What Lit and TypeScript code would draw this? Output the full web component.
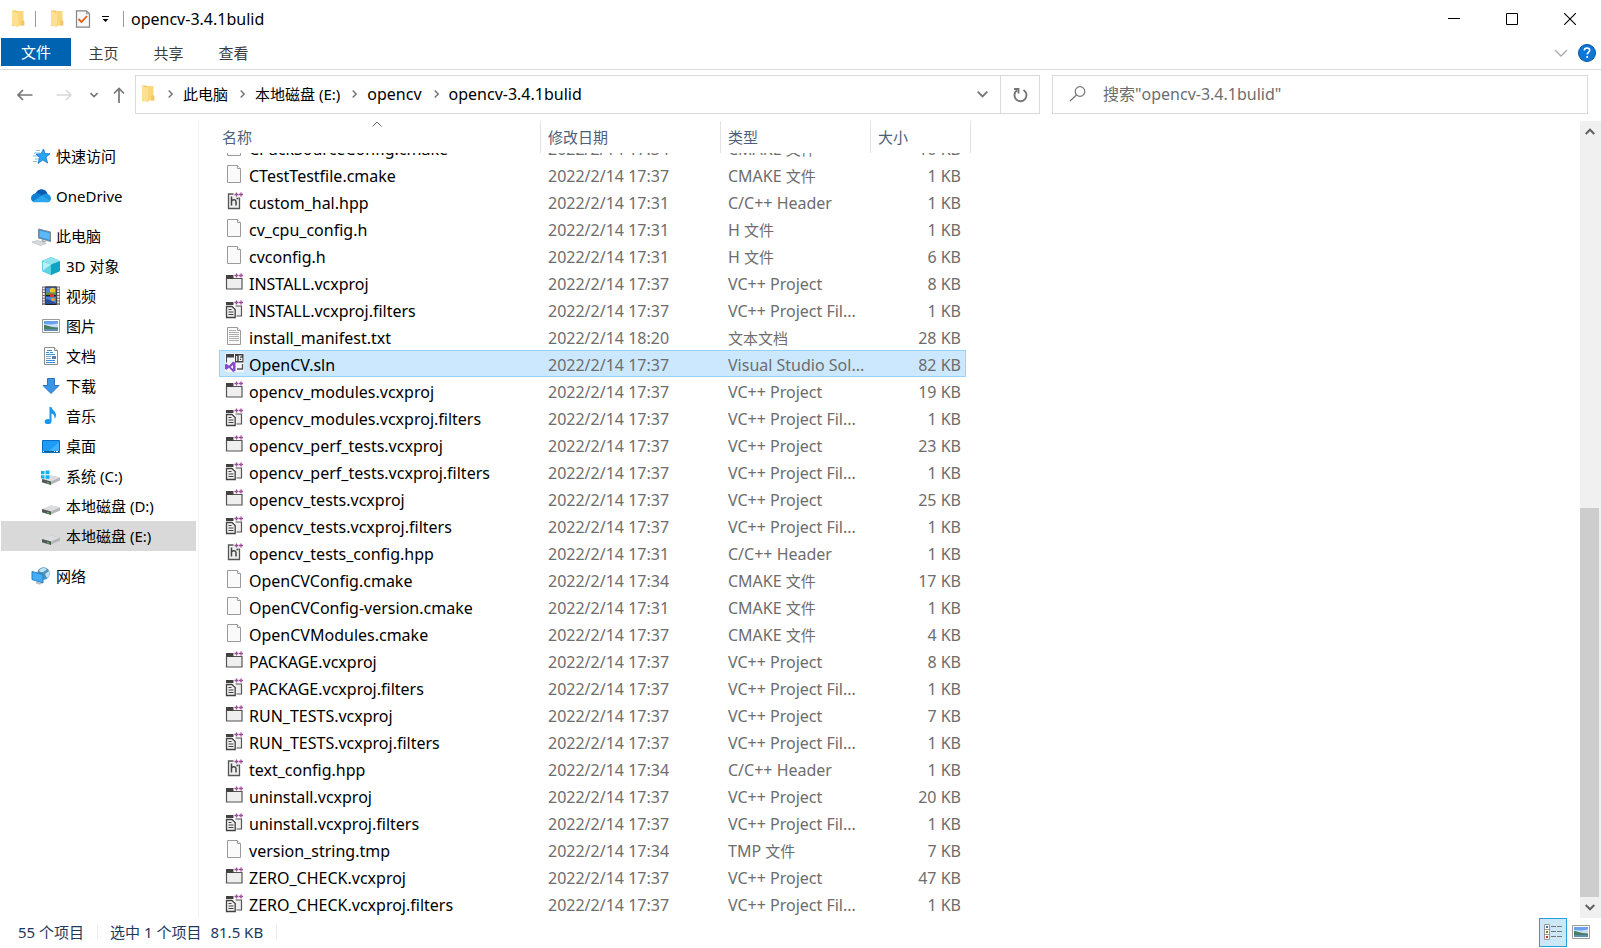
import { LitElement, html, svg, css, TemplateResult } from "lit";
import { customElement, state } from "lit/decorators.js";
import { classMap } from "lit/directives/class-map.js";

const FOLDER = svg`
  <path d="M2 .5h4l3 1.500v14H2z" fill="#f0c25c"/>
  <path d="M7 1h6.500v9.500L14.500 11v4.500H7z" fill="#fbd77c"/>
  <path d="M11.500 10.500h2.500v5h-3z" fill="#f3c766"/>
  <path d="M2 .5l6 2.500v14.500l-6-2.500z" fill="#ffe093"/>`;

const PLUS_PLUS = svg`<path d="M9.500 3.500h4M11.500 1.500v4M14 3.500h4M16 1.500v4" stroke="#9b4f96" stroke-width="1.300"/>`;

const DRIVE = svg`
  <path d="M1 13.500L10 9.500l9 2v3l-9 4-9-2z" fill="#b3b5b9"/>
  <path d="M1 13l9-3.500 9 2-9 4z" fill="#dcdde0"/>
  <path d="M1 13l9 2.500v3.500l-9-2.800z" fill="#55565a"/>
  <path d="M6 15.800l2 .6v1.300l-2-.6z" fill="#3fd43f"/>`;

const PICTURE = svg`
  <path d="M1.500 3.500h17v13h-17z" fill="#fff" stroke="#9a9a9a"/>
  <path d="M3 5h14v10H3z" fill="#c5e0f8"/>
  <path d="M3 5h14v2.500l-7 1-7-.5z" fill="#6aa0f0"/>
  <path d="M3 9c3 0 5 2 14 2.500v2H3z" fill="#4c7d62"/>
  <path d="M3 13h14v2H3z" fill="#5c8fb0"/>`;

/* Every glyph is drawn on a 20 x 20 grid. */
const ICONS: Record<string, TemplateResult> = {
  star: svg`
    <path d="M3 7h6M5 4.500h4M2 10h5M4 13h4M2 15.500h4" stroke="#7cc0f0" stroke-width="1"/>
    <path d="M12.500 3l1.500 4.500 5 .3-4 3.400 1.600 5.800-4.800-3-4.800 3.500 1.600-6-3.600-3.200 5-.6z" fill="#2ba3f3" stroke="#1779c4" stroke-width=".8"/>`,
  cloud: svg`
    <path d="M3.500 9.500C5 5 8 3 11 3.200c3 .2 5 2.300 5.500 4.800L11 12z" fill="#0a5cb8"/>
    <path d="M4 7.500c2.500-1 5 .2 7 2l4 3-11 3.800C1.500 16.300 0 14.500 0 12.300 0 9.800 1.800 8 4 7.500z" fill="#1180d3"/>
    <path d="M11 9.500c2-2 4.500-2 6-1.300 2 .8 3 2.300 3 4.300 0 2.300-1.500 3.800-3.800 3.800L9 13z" fill="#1a93e2"/>
    <path d="M2 15.200l9-5.700 8.200 5.300c-.8 1-1.700 1.500-3 1.500H4c-.8 0-1.500-.4-2-1.100z" fill="#2da6ee"/>`,
  pc: svg`
    <path d="M7.500 3l12 3v9.500l-12-3.500z" fill="#2a8bdc" stroke="#7f8a94"/>
    <path d="M8.500 4.500l10.300 2.600v7L8.500 11z" fill="#5cb8f8"/>
    <path d="M11 14l4 1.200-1 1.300-4-1.200z" fill="#9ba2a8"/>
    <path d="M1 16l5.500-1.500L15 17.500 9.500 19.500z" fill="#d8dbde" stroke="#aab0b5" stroke-width=".6"/>`,
  cube: svg`
    <path d="M1 5l9-4 9 4v10l-9 4-9-4z" fill="#1ab0cf"/>
    <path d="M1 5l9 3v11l-9-4z" fill="#5fd3e2"/>
    <path d="M10 8l9-3v10l-9 4z" fill="#0fa3c4"/>
    <path d="M1 5l9-4 9 4-9 3.500z" fill="#8fe3ec"/>
    <path d="M10 8.500L2 14.500V5.800z" fill="#b5f1f5"/>`,
  film: svg`
    <path d="M1 .5h18v18.500H1z" fill="#6b6d70"/>
    <path d="M2.700 1.500v17M17.300 1.500v17" stroke="#f0f0f0" stroke-width="2" stroke-dasharray="1.800 1"/>
    <path d="M4.500.5h11V19h-11z" fill="#1d1d20"/>
    <path d="M5 1.500h10v7.500H5zM5 10.500h10V18H5z" fill="#4b84dc"/>
    <circle cx="11.500" cy="4.500" r="2.700" fill="#f2c230"/><path d="M5 6.500h10V9H5z" fill="#6d8d3a"/>
    <path d="M9 8h4v3H9z" fill="#d33a2c"/><path d="M5 13l4 1 6 3v1H5z" fill="#2b4c96"/><circle cx="12" cy="13.500" r="1.800" fill="#e3a82a"/>`,
  picture: PICTURE,
  document: svg`
    <path d="M3.500 1.500h10l3 3v14h-13z" fill="#fff" stroke="#8c8c8c"/>
    <path d="M13.500 1.500v3h3" fill="#eee" stroke="#8c8c8c"/>
    <path d="M5 6.500h3M6 4.500h5M9 6.500h3M5 8.500h9M5 14.500h9M5 16.500h9" stroke="#3a8fd6"/>
    <path d="M5 10.500h5M5 12.500h5" stroke="#7aa7cf"/><path d="M11 10h4v3h-4z" fill="#5b7fa5"/>`,
  download: svg`<path d="M6.500 2.500h7v7h4.500L10 17.500 2 9.500h4.500z" fill="#3a94e8" stroke="#2a74bf"/>`,
  music: svg`
    <ellipse cx="7" cy="15.500" rx="3.300" ry="2.600" fill="#1896f0"/>
    <path d="M8.500 1h2c.3 3 4.500 4 4.500 8 0 1.800-.6 3-1.500 4 .5-3.500-1.200-5-3-5.500V15.500h-2z" fill="#1896f0"/>`,
  desktop: svg`
    <path d="M1.500 4.500h17v12h-17z" fill="#1f9bf5" stroke="#0b6fbf"/>
    <path d="M8 15L18 6v9z" fill="#3fb0ff"/>
    <path d="M2 15.500h16" stroke="#0c5ea3"/><path d="M2 15.500h1M13 15.500h1M15 15.500h2" stroke="#fff"/>`,
  system: svg`${DRIVE}<path d="M0 5h3.500v3.200H0zM4.500 4.500h4v3.700h-4zM0 9.200h3.500v3.200H0zM4.500 9.200h4v3.500h-4z" fill="#0fb1f0"/>`,
  drive: DRIVE,
  network: svg`
    <circle cx="12.500" cy="7.500" r="6.300" fill="#5093bd"/>
    <path d="M8 4.500c2-3 5-3 7-2s-1 2-2 3-4 1-5-1zM14 8l4-3c1.500 3 0 6-2 7z" fill="#c5e3ee"/>
    <path d="M1 5.500l11 3v8.500L1 13.500z" fill="#43adf5" stroke="#2b7fb9"/>
    <path d="M5 15.500l6 1.700-2 1.500-4-1.200z" fill="#b4bcc2"/>`,
  page: svg`
    <path d="M2.500 1.500h10l3 3v14h-13z" fill="#fafafa" stroke="#9a9a9a"/>
    <path d="M12.500 1.500v3h3" fill="#fff" stroke="#9a9a9a"/>`,
  text: svg`
    <path d="M2.500 1.500h10l3 3v14h-13z" fill="#fafafa" stroke="#9a9a9a"/>
    <path d="M12.500 1.500v3h3" fill="#fff" stroke="#9a9a9a"/>
    <path d="M4 4.500h7M4 6.500h10M4 8.500h10M4 10.500h10M4 12.500h10M4 14.500h10" stroke="#b0b0b0"/>`,
  header: svg`
    <path d="M3 3h11.500v14.500H3z" fill="#efeff0"/>
    <path d="M8.500 3H3.500v14.500h11V6.500" stroke="#555" stroke-width="1.300"/>
    <path d="M6.500 5.500v9M6.500 10c1-1.800 4.500-1.800 4.500.5v4M11.500 7.500h2" stroke="#424242" stroke-width="1.500"/>
    ${PLUS_PLUS}`,
  project: svg`
    <path d="M1.500 6.500h15.500v10.500h-15.500z" fill="#efeff0" stroke="#555" stroke-width="1.200"/>
    <path d="M1 3h7.500v4H1z" fill="#424242"/>${PLUS_PLUS}`,
  filters: svg`
    <path d="M10.500 7h6v10h-5" fill="#efeff0" stroke="#555" stroke-width="1.200"/>
    <path d="M1 3h7.500v3H1z" fill="#424242"/>
    <path d="M1.500 7.500h5.500l3.200 3v8H1.500z" fill="#efeff0" stroke="#424242" stroke-width="1.300"/>
    <path d="M3.500 10.500h3M3.500 13h5M3.500 15.500h5" stroke="#424242" stroke-width="1.200"/>${PLUS_PLUS}`,
  solution: svg`
    <path d="M0 .5h19v18.500H0z" fill="#f3f5f8"/>
    <path d="M1 1h8v3.500H1zM1 4.500h1v5H1z" fill="#424242"/>
    <path d="M10 1h8.500v8.500H10z" fill="#424242"/>
    <path d="M11.700 3v5M16.800 3h-2.500v4.500h2.500V5.200h-2.500" stroke="#fff" stroke-width="1.100"/>
    <path d="M17.500 11v5H12" stroke="#555" stroke-width="1.300"/>
    <path d="M0 11.500l1.500-.8 2.500 2 4-4.200 2.500 1.200v8L8 19l-4-4.300-2.500 2L0 16zM8 12l-2.300 2L8 16z" fill="#8a49cc" fill-rule="evenodd"/>`,
};

const icon = (name: string) => html`<svg class="icon" viewBox="0 0 20 20" aria-hidden="true">${ICONS[name]}</svg>`;

interface Place { id: string; label: string; icon: string; child?: boolean; }
const GROUPS: Place[][] = [
  [{ id: "quick", label: "快速访问", icon: "star" }],
  [{ id: "onedrive", label: "OneDrive", icon: "cloud" }],
  [
    { id: "pc", label: "此电脑", icon: "pc" },
    { id: "3d", label: "3D 对象", icon: "cube", child: true },
    { id: "video", label: "视频", icon: "film", child: true },
    { id: "pictures", label: "图片", icon: "picture", child: true },
    { id: "docs", label: "文档", icon: "document", child: true },
    { id: "downloads", label: "下载", icon: "download", child: true },
    { id: "music", label: "音乐", icon: "music", child: true },
    { id: "desktop", label: "桌面", icon: "desktop", child: true },
    { id: "c", label: "系统 (C:)", icon: "system", child: true },
    { id: "d", label: "本地磁盘 (D:)", icon: "drive", child: true },
    { id: "e", label: "本地磁盘 (E:)", icon: "drive", child: true },
  ],
  [{ id: "network", label: "网络", icon: "network" }],
];

/* glyph, Latin part of the type, Chinese part of the type */
const KINDS: Record<string, [string, string, string]> = {
  cmake: ["page", "CMAKE ", "文件"],
  hpp: ["header", "C/C++ Header", ""],
  h: ["page", "H ", "文件"],
  vcxproj: ["project", "VC++ Project", ""],
  filters: ["filters", "VC++ Project Fil...", ""],
  txt: ["text", "", "文本文档"],
  sln: ["solution", "Visual Studio Sol...", ""],
  tmp: ["page", "TMP ", "文件"],
};

/* name, time modified, size in KB */
const FILES: [string, string, number][] = [
  ["CPackSourceConfig.cmake", "17:34", 10],
  ["CTestTestfile.cmake", "17:37", 1],
  ["custom_hal.hpp", "17:31", 1],
  ["cv_cpu_config.h", "17:31", 1],
  ["cvconfig.h", "17:31", 6],
  ["INSTALL.vcxproj", "17:37", 8],
  ["INSTALL.vcxproj.filters", "17:37", 1],
  ["install_manifest.txt", "18:20", 28],
  ["OpenCV.sln", "17:37", 82],
  ["opencv_modules.vcxproj", "17:37", 19],
  ["opencv_modules.vcxproj.filters", "17:37", 1],
  ["opencv_perf_tests.vcxproj", "17:37", 23],
  ["opencv_perf_tests.vcxproj.filters", "17:37", 1],
  ["opencv_tests.vcxproj", "17:37", 25],
  ["opencv_tests.vcxproj.filters", "17:37", 1],
  ["opencv_tests_config.hpp", "17:31", 1],
  ["OpenCVConfig.cmake", "17:34", 17],
  ["OpenCVConfig-version.cmake", "17:31", 1],
  ["OpenCVModules.cmake", "17:37", 4],
  ["PACKAGE.vcxproj", "17:37", 8],
  ["PACKAGE.vcxproj.filters", "17:37", 1],
  ["RUN_TESTS.vcxproj", "17:37", 7],
  ["RUN_TESTS.vcxproj.filters", "17:37", 1],
  ["text_config.hpp", "17:34", 1],
  ["uninstall.vcxproj", "17:37", 20],
  ["uninstall.vcxproj.filters", "17:37", 1],
  ["version_string.tmp", "17:34", 7],
  ["ZERO_CHECK.vcxproj", "17:37", 47],
  ["ZERO_CHECK.vcxproj.filters", "17:37", 1],
];

const base = css`
  * { box-sizing: border-box; }
  button {
    font: inherit; color: inherit; background: none; border: 0; padding: 0; margin: 0;
    display: flex; align-items: center; justify-content: center; white-space: nowrap;
  }
  .icon { width: 20px; height: 20px; flex: none; display: block; }
  svg { display: block; flex: none; fill: none; }
`;

@customElement("title-bar")
class TitleBar extends LitElement {
  static styles = [base, css`
    :host { display: flex; align-items: center; height: 38px; padding: 0 2px 0 10px; }
    .folder { width: 16px; height: 18px; }
    .bar { width: 1px; height: 16px; background: #9a9a9a; }
    .quick { display: flex; align-items: center; }
    .gap-b { margin-left: 13px; }
    .gap-a { margin-left: 9px; }
    .gap-c { margin-left: 10px; }
    h1 { font-size: 16px; font-weight: 400; margin: 0 0 0 7px; flex: 1; color: #000; line-height: 38px; }
    .window { display: flex; align-self: stretch; }
    .window button { width: 58px; }
  `];
  render() {
    return html`
      <svg class="folder" viewBox="0 0 16 18">${FOLDER}</svg>
      <div class="quick">
        <span class="bar gap-a"></span>
        <button class="gap-b" aria-label="新建文件夹"><svg class="folder" viewBox="0 0 16 18">${FOLDER}</svg></button>
        <button class="gap-c" aria-label="属性">
          <svg width="16" height="18" viewBox="0 0 16 18">
            <path d="M1.500.8h10l3 3v13.400h-13z" fill="#f7f7f7" stroke="#858585" stroke-width="1.200"/>
            <path d="M11.500.8v3h3" stroke="#9a9a9a"/>
            <path d="M3.500 9l3 3L12 6" stroke="#e8590c" stroke-width="1.800"/>
          </svg>
        </button>
        <button class="gap-c" aria-label="自定义快速访问工具栏">
          <svg width="9" height="8" viewBox="0 0 9 8"><path d="M1 1.500h7" stroke="#000"/><path d="M1.500 4h6L4.500 7z" fill="#000"/></svg>
        </button>
        <span class="bar gap-b"></span>
      </div>
      <h1>opencv-3.4.1bulid</h1>
      <div class="window">
        <button aria-label="最小化"><svg width="12" height="12"><path d="M0 5.500h12" stroke="#000"/></svg></button>
        <button aria-label="最大化"><svg width="12" height="12"><path d="M.5.5h11v11H.5z" stroke="#000"/></svg></button>
        <button aria-label="关闭"><svg width="12" height="12"><path d="M0 0l12 12M12 0L0 12" stroke="#000" stroke-width="1.100"/></svg></button>
      </div>`;
  }
}

@customElement("ribbon-tabs")
class RibbonTabs extends LitElement {
  static styles = [base, css`
    :host { display: flex; height: 32px; padding-left: 1px; border-bottom: 1px solid #dadbdc; color: #3b3b3b; }
    nav { display: flex; align-items: flex-start; flex: 1; }
    nav button { width: 65px; height: 30px; }
    nav .file { width: 70px; height: 28px; background: #0063b1; color: #fff; }
    .tools { display: flex; align-items: center; gap: 10px; padding-right: 5px; height: 30px; }
  `];
  render() {
    return html`
      <nav>
        <button class="file">文件</button>
        ${["主页", "共享", "查看"].map((t) => html`<button>${t}</button>`)}
      </nav>
      <div class="tools">
        <button aria-label="展开功能区"><svg width="14" height="8" viewBox="0 0 14 8"><path d="M1 1l6 6 6-6" stroke="#a9a9a9" stroke-width="1.300"/></svg></button>
        <button aria-label="帮助"><svg width="18" height="18" viewBox="0 0 18 18">
          <circle cx="9" cy="9" r="8.500" fill="#0a78d7" stroke="#08559c"/>
          <path d="M6.300 6.600c0-1.800 1.200-2.600 2.700-2.600s2.700.8 2.700 2.300c0 2-2.500 2-2.500 4.200M9.200 12v2" stroke="#fff" stroke-width="1.600"/>
        </svg></button>
      </div>`;
  }
}

@customElement("address-bar")
class AddressBar extends LitElement {
  static styles = [base, css`
    :host { display: grid; grid-template-columns: 135px minmax(0, 905fr) minmax(0, 548fr); align-items: center; padding: 5px 13px 0 0; height: 44px; }
    .nav { display: flex; align-items: center; padding-left: 17px; }
    .forward { margin-left: 23px; }
    .recent { margin-left: 18px; }
    .up { margin-left: 15px; }
    .box { display: flex; align-items: stretch; height: 39px; border: 1px solid #d9d9d9; background: #fff; }
    .path { padding-left: 4px; }
    .crumbs { display: flex; align-items: center; flex: 1; min-width: 0; margin: 0; padding: 0 0 1px; list-style: none; color: #000; }
    .crumbs li { display: flex; align-items: center; }
    .folder { width: 16px; height: 18px; }
    .sep { margin: 0 10px 0 12px; }
    .drop { width: 36px; }
    .refresh { width: 39px; border-left: 1px solid #d9d9d9; }
    .search { margin-left: 12px; align-items: center; padding: 0 0 1px 16px; gap: 17px; }
    input { font: inherit; font-size: 16px; flex: 1; min-width: 0; border: 0; outline: 0; padding: 0; background: none; color: #6d6d6d; }
    input::placeholder { color: #6d6d6d; opacity: 1; }
    a { color: inherit; text-decoration: none; white-space: nowrap; }
    a.latin { font-size: 16px; }
  `];
  render() {
    const crumbs = ["此电脑", "本地磁盘 (E:)", "opencv", "opencv-3.4.1bulid"];
    return html`
      <div class="nav">
        <button aria-label="后退"><svg width="16" height="12" viewBox="0 0 16 12"><path d="M6 1L1 6l5 5M1 6h14.500" stroke="#767676" stroke-width="1.700"/></svg></button>
        <button class="forward" aria-label="前进"><svg width="16" height="12" viewBox="0 0 16 12"><path d="M10 1l5 5-5 5M15 6H.5" stroke="#d8d8d8" stroke-width="1.500"/></svg></button>
        <button class="recent" aria-label="最近的位置"><svg width="8" height="6" viewBox="0 0 8 6"><path d="M.5 1L4 4.500 7.500 1" stroke="#767676" stroke-width="1.600"/></svg></button>
        <button class="up" aria-label="向上"><svg width="12" height="16" viewBox="0 0 12 16"><path d="M1 6.500l5-5 5 5M6 1.500V16" stroke="#767676" stroke-width="1.700"/></svg></button>
      </div>
      <div class="box path">
        <ol class="crumbs">
          <li><svg class="folder" viewBox="0 0 16 18">${FOLDER}</svg></li>
          ${crumbs.map((c) => html`
            <li>
              <svg class="sep" width="5" height="8" viewBox="0 0 5 8"><path d="M.7.500L4.200 4 .7 7.500" stroke="#767676" stroke-width="1.500"/></svg>
              <a href="#" class=${classMap({ latin: c.startsWith("opencv") })}>${c}</a>
            </li>`)}
        </ol>
        <button class="drop" aria-label="以前的位置"><svg width="11" height="7" viewBox="0 0 11 7"><path d="M.7.7l4.800 4.800L10.300.7" stroke="#767676" stroke-width="1.800"/></svg></button>
        <button class="refresh" aria-label="刷新">
          <svg width="16" height="16" viewBox="0 0 16 16"><path d="M11.500 3a6 6 0 1 1-6.500.3M2 2h4.500v4.500" stroke="#767676" stroke-width="1.900"/></svg>
        </button>
      </div>
      <label class="box search">
        <svg width="17" height="16" viewBox="0 0 17 16"><circle cx="11" cy="5.500" r="4.800" stroke="#767676" stroke-width="1.200"/><path d="M7.500 9L1 15" stroke="#767676" stroke-width="1.300"/></svg>
        <input type="text" aria-label="搜索" placeholder='搜索"opencv-3.4.1bulid"' />
      </label>`;
  }
}

@customElement("side-nav")
class SideNav extends LitElement {
  @state() current = "e";
  static styles = [base, css`
    :host { display: block; width: 199px; flex: none; border-right: 1px solid #f2f2f2; padding: 20px 2px 0 1px; color: #000; }
    nav { display: flex; flex-direction: column; gap: 10px; }
    a { display: flex; align-items: center; height: 30px; padding-left: 30px; gap: 5px; color: inherit; text-decoration: none; white-space: nowrap; }
    a.child { padding-left: 40px; }
    a.current { background: #d9d9d9; }
  `];
  render() {
    return html`<nav>
      ${GROUPS.map((g) => html`<div>
        ${g.map((p) => html`
          <a href="#${p.id}" class=${classMap({ child: !!p.child, current: p.id === this.current })}
            @click=${(e: Event) => { e.preventDefault(); this.current = p.id; }}>${icon(p.icon)}${p.label}</a>`)}
      </div>`)}
    </nav>`;
  }
}

@customElement("file-list")
class FileList extends LitElement {
  @state() selected = "OpenCV.sln";
  static styles = [base, css`
    :host { display: flex; flex: 1; min-width: 0; min-height: 0; }
    table { display: flex; flex-direction: column; flex: 1; min-width: 0; padding-left: 20px; }
    thead { display: block; flex: none; }
    tr { display: grid; grid-template-columns: 322px 180px 150px 95px; width: 747px; }
    thead tr { grid-template-columns: 322px 180px 150px 100px; width: 752px; }
    th {
      position: relative; height: 32px; border-right: 1px solid #e2e2e2; padding: 0 0 0 7px;
      font-weight: 400; text-align: left; line-height: 32px; color: #4c607a;
    }
    th:first-child { padding-left: 3px; }
    .sort { position: absolute; left: 153px; top: 0; }
    tbody { display: flex; flex-direction: column; justify-content: flex-end; flex: 1; min-height: 0; overflow: hidden; padding-bottom: 1px; }
    tbody tr { flex: none; height: 27px; line-height: 24px; font-size: 16px; color: #6d6d6d; }
    td { padding: 3px 0 0 7px; white-space: nowrap; min-width: 0; }
    td.name { display: flex; gap: 4px; padding-left: 6px; color: #000; }
    td.size { text-align: right; padding-right: 5px; }
    .han { font-size: 15px; }
    tr.selected { background: #cce8ff; box-shadow: inset 0 0 0 1px #99d1ff; }
  `];
  render() {
    return html`<table>
      <thead><tr>
        <th scope="col">名称<svg class="sort" width="10" height="6" viewBox="0 0 10 6"><path d="M.5 5.500L5 1l4.500 4.500" stroke="#6d6d6d"/></svg></th>
        <th scope="col">修改日期</th><th scope="col">类型</th><th scope="col">大小</th>
      </tr></thead>
      <tbody>
        ${FILES.map(([name, time, size]) => {
          const [glyph, latin, han] = KINDS[name.slice(name.lastIndexOf(".") + 1)];
          return html`<tr class=${classMap({ selected: name === this.selected })} @click=${() => (this.selected = name)}>
            <td class="name">${icon(glyph)}<span>${name}</span></td>
            <td>2022/2/14 ${time}</td><td>${latin}${han ? html`<span class="han">${han}</span>` : ""}</td><td class="size">${size} KB</td>
          </tr>`;
        })}
      </tbody>
    </table>`;
  }
}

@customElement("scroll-strip")
class ScrollStrip extends LitElement {
  static styles = [base, css`
    :host { display: flex; flex-direction: column; width: 21px; flex: none; background: #f0f0f0; }
    button { height: 21px; margin-right: 2px; }
    .track { flex: 1; display: flex; flex-direction: column; }
    .before { flex: 366; }
    .thumb { flex: 389; background: #cdcdcd; margin-right: 2px; }
  `];
  render() {
    return html`
      <button aria-label="向上滚动"><svg width="10" height="7" viewBox="0 0 10 7"><path d="M.7 6L5 1.700 9.300 6" stroke="#606060" stroke-width="2"/></svg></button>
      <div class="track"><div class="before"></div><div class="thumb"></div></div>
      <button aria-label="向下滚动"><svg width="10" height="7" viewBox="0 0 10 7"><path d="M.7 1L5 5.300 9.300 1" stroke="#606060" stroke-width="2"/></svg></button>`;
  }
}

@customElement("status-bar")
class StatusBar extends LitElement {
  static styles = [base, css`
    :host { display: flex; align-items: center; height: 30px; padding: 0 6px 2px 18px; color: #1e395b; }
    .cell { display: flex; gap: 9px; height: 14px; line-height: 14px; align-items: center; border-right: 1px solid #ececec; padding-right: 13px; margin-right: 12px; white-space: nowrap; }
    .spacer { flex: 1; }
    button { width: 28px; height: 29px; }
    .on { background: #cce8f6; border: 1px solid #26a0da; }
  `];
  render() {
    return html`
      <span class="cell">55 个项目</span>
      <span class="cell"><span>选中 1 个项目</span><span>81.5 KB</span></span>
      <span class="spacer"></span>
      <button class="on" aria-label="详细信息">
        <svg width="18" height="16" viewBox="0 0 18 16">
          <path d="M.5.500h5v15h-5zM.5 5.500h5M.5 10.500h5" fill="#fff" stroke="#999"/>
          <path d="M2 2h2v2H2z" fill="#3d78a8"/><path d="M2 7h2v2H2z" fill="#6d8a1e"/><path d="M2 12h2v2H2z" fill="#c03a1e"/>
          <path d="M7 2.500h5M13 2.500h5M7 7.500h5M13 7.500h5M7 12.500h5M13 12.500h5" stroke="#777"/>
        </svg>
      </button>
      <button aria-label="大图标">${icon("picture")}</button>`;
  }
}

@customElement("app-root")
class AppRoot extends LitElement {
  static styles = [base, css`
    :host {
      display: flex; flex-direction: column; height: 100vh; overflow: hidden; background: #fff;
      font: 15px/20px "Noto Sans", "Noto Sans CJK SC", sans-serif;
    }
    main { display: flex; flex: 1; min-height: 0; padding-top: 7px; }
  `];
  render() {
    return html`
      <title-bar></title-bar>
      <ribbon-tabs></ribbon-tabs>
      <address-bar></address-bar>
      <main><side-nav></side-nav><file-list></file-list><scroll-strip></scroll-strip></main>
      <status-bar></status-bar>`;
  }
}
